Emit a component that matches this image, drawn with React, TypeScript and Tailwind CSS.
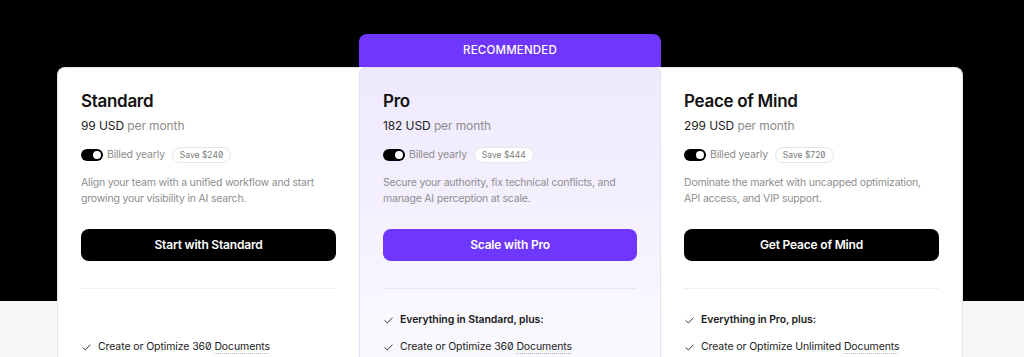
import React from "react";

type Plan = {
  name: string;
  price: string;
  save: string;
  desc: string[];
  cta: string;
  everything?: string;
  docs: string;
  pro?: boolean;
};

const plans: Plan[] = [
  {
    name: "Standard",
    price: "99 USD",
    save: "Save $240",
    desc: ["Align your team with a unified workflow and start", "growing your visibility in AI search."],
    cta: "Start with Standard",
    docs: "360",
  },
  {
    name: "Pro",
    price: "182 USD",
    save: "Save $444",
    desc: ["Secure your authority, fix technical conflicts, and", "manage AI perception at scale."],
    cta: "Scale with Pro",
    everything: "Everything in Standard, plus:",
    docs: "360",
    pro: true,
  },
  {
    name: "Peace of Mind",
    price: "299 USD",
    save: "Save $720",
    desc: ["Dominate the market with uncapped optimization,", "API access, and VIP support."],
    cta: "Get Peace of Mind",
    everything: "Everything in Pro, plus:",
    docs: "Unlimited",
  },
];

function Check() {
  return (
    <svg width="9" height="7" viewBox="0 0 9 7" fill="none" className="shrink-0 ml-[1px]">
      <path d="M0.8 3.6 L3.3 6 L8.2 0.9" stroke="#3a3a3a" strokeWidth="1" strokeLinecap="round" strokeLinejoin="round" />
    </svg>
  );
}

function PlanBody({ p }: { p: Plan }) {
  return (
    <div className="flex flex-col px-[23px] pt-[21px]">
      <h2 className="text-[17px] leading-[24px] font-semibold text-[#111] tracking-[-0.3px]">{p.name}</h2>
      <div className="mt-[3px] text-[12px] leading-[20px] text-[#222] tracking-[-0.1px]">
        {p.price} <span className="text-[#8c8c8c]">per month</span>
      </div>
      <div className="mt-[9px] flex items-center h-[20px]">
        <div className="w-[22px] h-[12px] rounded-full bg-black flex items-center justify-end pr-[2px]">
          <div className="w-[8px] h-[8px] rounded-full bg-white" />
        </div>
        <span className="ml-[4px] text-[10.5px] tracking-[-0.2px] text-[#8c8c8c]">Billed yearly</span>
        <span className="ml-[7px] h-[16px] px-[7px] flex items-center rounded-full border border-[#e6e6e6] bg-white text-[8.5px] text-[#7a7a7a] [font-feature-settings:'zero']">
          {p.save}
        </span>
      </div>
      <div className="mt-[10px] text-[10.5px] leading-[16px] tracking-[-0.2px] text-[#8e8e8e] whitespace-nowrap">
        {p.desc.map((d) => (
          <div key={d}>{d}</div>
        ))}
      </div>
      <button
        className={`mt-[22px] h-[32px] w-full rounded-[8px] text-[12px] tracking-[-0.2px] font-semibold text-white ${
          p.pro ? "bg-[#6f37fd]" : "bg-black"
        }`}
      >
        {p.cta}
      </button>
      <div className={`mt-[27px] h-px ${p.pro ? "bg-[#e8e2fb]" : "bg-[#f0f0f0]"}`} />
      <div className="mt-[22px] h-[18px] flex items-center gap-[7px] text-[10.5px] tracking-[-0.1px] font-semibold text-[#1a1a1a] whitespace-nowrap">
        {p.everything ? (
          <>
            <Check />
            <span>{p.everything}</span>
          </>
        ) : null}
      </div>
      <div className="mt-[9px] h-[18px] flex items-center gap-[7px] text-[10.5px] tracking-[-0.1px] text-[#222] whitespace-nowrap [font-feature-settings:'zero']">
        <Check />
        <span>
          Create or Optimize {p.docs}{" "}
          <span className="underline decoration-dotted decoration-[#b5b5b5] underline-offset-[3px]">Documents</span>
        </span>
      </div>
      <div className="h-[40px]" />
    </div>
  );
}

export default function App() {
  return (
    <div
      className="w-[1024px] h-[357px] overflow-hidden bg-[linear-gradient(to_bottom,#000_0px,#000_301px,#f6f6f6_301px)] pt-[34px]"
      style={{ fontFamily: "Inter, 'Noto Sans', sans-serif" }}
    >
      <div className="ml-[57px] w-[906px] grid grid-cols-3">
        <div className="mt-[33px] bg-white rounded-l-[8px] border border-r-0 border-[#e4e4e4]">
          <PlanBody p={plans[0]} />
        </div>
        <div className="flex flex-col">
          <div className="h-[33px] bg-[#6f37fd] rounded-t-[8px] flex items-center justify-center text-[11.5px] font-medium tracking-[0.2px] text-white">
            RECOMMENDED
          </div>
          <div className="bg-white">
            <div className="rounded-t-[6px] border border-[#e6e0f7] bg-[linear-gradient(to_bottom,#efe9fe_0px,#f5f1ff_160px,#faf8ff_260px)]">
              <PlanBody p={plans[1]} />
            </div>
          </div>
        </div>
        <div className="mt-[33px] bg-white rounded-r-[8px] border border-l-0 border-[#e4e4e4]">
          <PlanBody p={plans[2]} />
        </div>
      </div>
    </div>
  );
}
